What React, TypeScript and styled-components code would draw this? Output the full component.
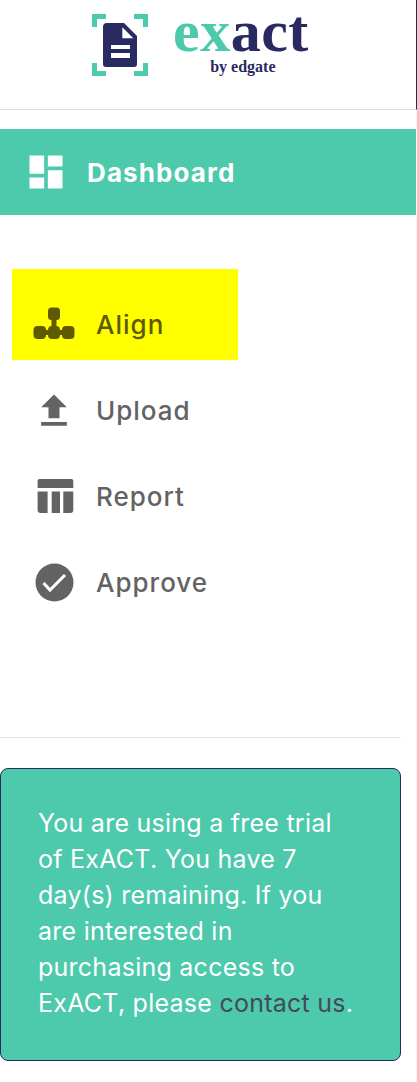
import styled, { createGlobalStyle } from "styled-components";

const teal = "#4dc9ac";
const navy = "#2a2a62";

const GlobalStyle = createGlobalStyle`
  html, body {
    margin: 0;
    padding: 0;
    background: #fff;
    font-family: "Inter", "Open Sans", sans-serif;
  }
  * { box-sizing: border-box; }
`;

const Sidebar = styled.aside`
  width: 417px;
  min-height: 1082px;
  background: #fff;
  border-right: 1px solid #f4f4f4;
`;

const LogoBar = styled.header`
  height: 110px;
  margin-right: -1px;
  padding-top: 14px;
  padding-left: 92px;
  display: flex;
  align-items: flex-start;
  gap: 25px;
  border-bottom: 1px solid #dcdce8;
  border-right: 1px solid ${navy};
`;

const Wordmark = styled.div`
  font-family: "Liberation Serif", serif;
  font-weight: 700;
  color: ${navy};
  display: flex;
  flex-direction: column;
  align-items: center;
  margin-top: -11px;
`;

const WordmarkMain = styled.div`
  font-size: 60px;
  line-height: 56px;
  height: 56px;
  letter-spacing: 0.5px;
`;

const WordmarkAccent = styled.span`
  color: ${teal};
`;

const WordmarkSub = styled.div`
  font-size: 16px;
  line-height: 16px;
  padding-left: 4px;
`;

const DashboardBand = styled.div`
  margin-top: 19px;
  height: 86px;
  background: ${teal};
  color: #fff;
  display: flex;
  align-items: center;
  padding-left: 24px;
  gap: 19px;
`;

const DashboardLabel = styled.span`
  font-size: 26px;
  font-weight: 700;
  letter-spacing: 1.1px;
`;

const NavList = styled.nav`
  margin-top: 54px;
  display: flex;
  flex-direction: column;
`;

const NavRow = styled.a<{ $marked?: boolean }>`
  display: flex;
  align-items: center;
  gap: 20px;
  color: ${(p) => (p.$marked ? "#5f5a00" : "#636363")};
  background: ${(p) => (p.$marked ? "#ffff00" : "transparent")};
  height: ${(p) => (p.$marked ? "91px" : "86px")};
  width: ${(p) => (p.$marked ? "226px" : "auto")};
  margin-left: ${(p) => (p.$marked ? "12px" : "0")};
  margin-bottom: ${(p) => (p.$marked ? "8px" : "0")};
  padding-top: ${(p) => (p.$marked ? "21px" : "0")};
  padding-left: ${(p) => (p.$marked ? "20px" : "32px")};
`;

const NavLabel = styled.span`
  font-size: 26px;
  font-weight: 500;
  letter-spacing: 1px;
  line-height: 30px;
  margin-top: -1px;
`;

const Divider = styled.hr`
  margin: 111px 15px 0 0;
  border: 0;
  border-top: 1px solid #e6e6e6;
`;

const TrialCard = styled.div`
  margin: 30px 15px 0 0;
  height: 293px;
  background: ${teal};
  border: 1px solid ${navy};
  border-radius: 8px;
  padding: 36px 46px 0 37px;
  color: #fff;
  font-size: 25px;
  letter-spacing: 0.25px;
  line-height: 36px;
`;

const ContactLink = styled.a`
  color: #454a58;
`;

const LogoMark = () => (
  <svg width="56" height="62" viewBox="0 0 56 62">
    <path
      d="M0 0h14v5H5v8H0zM42 0h14v13h-5V5h-9zM0 49h5v8h9v5H0zM51 49h5v13H42v-5h9z"
      fill={teal}
    />
    <path
      d="M15 9h17l13 13v28a3 3 0 0 1-3 3H14a3 3 0 0 1-3-3V13a4 4 0 0 1 4-4z"
      fill={navy}
    />
    <path d="M30.3 13.3v11h11z" fill="#fff" />
    <path d="M19 31h19v4H19zM19 39h19v5H19z" fill="#fff" />
  </svg>
);

const DashboardIcon = () => (
  <svg width="44" height="44" viewBox="0 0 24 24" fill="#fff">
    <path d="M3 13h8V3H3v10zm0 8h8v-6H3v6zm10 0h8V11h-8v10zm0-18v6h8V3h-8z" />
  </svg>
);

const AlignIcon = () => (
  <svg width="44" height="44" viewBox="0 0 44 44" fill="currentColor">
    <rect x="16" y="4.5" width="12" height="12.5" rx="3.5" />
    <rect x="1.5" y="23" width="12.5" height="13" rx="4" />
    <rect x="16" y="23" width="12" height="13" rx="4" />
    <rect x="30" y="23" width="12.5" height="13" rx="4" />
    <path d="M19.5 16h5v9h-5zM12 27h20v5H12z" />
  </svg>
);

const UploadIcon = () => (
  <svg width="44" height="44" viewBox="0 0 24 24" fill="currentColor">
    <path d="M9 16h6v-6h4l-7-7-7 7h4zm-4 2h14v2H5z" />
  </svg>
);

const ReportIcon = () => (
  <svg width="44" height="44" viewBox="0 0 44 44" fill="currentColor">
    <path d="M7.6 4h31.7a2 2 0 0 1 2 2v7H5.6V6a2 2 0 0 1 2-2z" />
    <path d="M5.6 16.5h10V38h-7a3 3 0 0 1-3-3zM19.7 16.5H28V38h-8.3zM31.3 16.5h10V35a3 3 0 0 1-3 3h-7z" />
  </svg>
);

const ApproveIcon = () => (
  <svg width="44" height="44" viewBox="0 0 44 44">
    <circle cx="22.5" cy="21.5" r="19" fill="currentColor" />
    <path d="M11.5 22l6.5 7 15-15" fill="none" stroke="#fff" strokeWidth="3" />
  </svg>
);

export default function App() {
  return (
    <>
      <GlobalStyle />
      <Sidebar>
        <LogoBar>
          <LogoMark />
          <Wordmark>
            <WordmarkMain>
              <WordmarkAccent>ex</WordmarkAccent>act
            </WordmarkMain>
            <WordmarkSub>by edgate</WordmarkSub>
          </Wordmark>
        </LogoBar>
        <DashboardBand>
          <DashboardIcon />
          <DashboardLabel>Dashboard</DashboardLabel>
        </DashboardBand>
        <NavList>
          <NavRow $marked>
            <AlignIcon />
            <NavLabel>Align</NavLabel>
          </NavRow>
          <NavRow>
            <UploadIcon />
            <NavLabel>Upload</NavLabel>
          </NavRow>
          <NavRow>
            <ReportIcon />
            <NavLabel>Report</NavLabel>
          </NavRow>
          <NavRow>
            <ApproveIcon />
            <NavLabel>Approve</NavLabel>
          </NavRow>
        </NavList>
        <Divider />
        <TrialCard>
          You are using a free trial of ExACT. You have 7 day(s) remaining. If
          you are interested in purchasing access to ExACT, please{" "}
          <ContactLink>contact us</ContactLink>.
        </TrialCard>
      </Sidebar>
    </>
  );
}
